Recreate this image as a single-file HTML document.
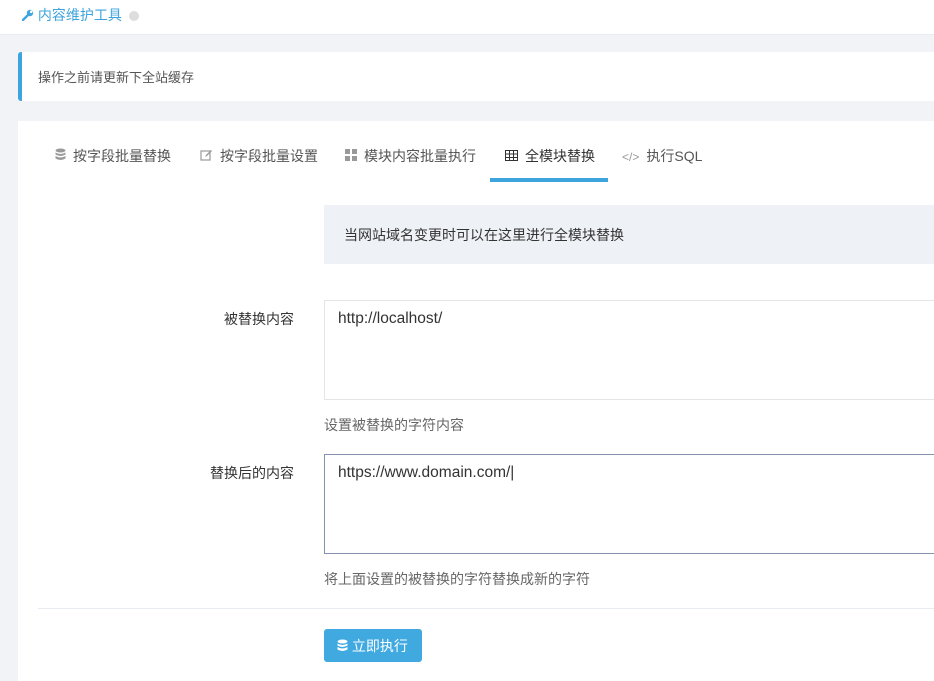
<!DOCTYPE html>
<html><head><meta charset="utf-8"><style>
*{box-sizing:border-box;margin:0;padding:0}
body{width:934px;height:673px;overflow:hidden;background:#f1f3f7;font-family:"Liberation Sans","Noto Sans CJK SC",sans-serif;font-size:14px;color:#333;position:relative}
.top{position:absolute;left:0;top:0;width:934px;height:35px;background:#fff;border-bottom:1px solid #e8ebf0}
.top .t{position:absolute;left:22px;top:5px;color:#3ea4dd;font-size:14px}
.dot{display:inline-block;width:10px;height:10px;border-radius:50%;background:#ddd;margin-left:7px;vertical-align:-1px}
.alert{position:absolute;left:18px;top:52px;width:916px;height:49px;background:#fff;border-left:4px solid #3ea4dd;border-radius:3px 0 0 3px;padding:15px 16px;color:#555;font-size:13px}
.panel{position:absolute;left:18px;top:121px;width:916px;height:560px;background:#fff}
.tab{position:absolute;top:25px;font-size:14px;color:#555;white-space:nowrap}
.tab i{color:#999;font-style:normal;margin-right:7px}
.ul{position:absolute;left:472px;top:57px;width:118px;height:4px;background:#3ea4dd}
.info{position:absolute;left:306px;top:84px;width:610px;height:59px;background:#eef1f5;padding:20px 20px;color:#333}
.lab{position:absolute;width:276px;text-align:right;color:#333}
.ta{position:absolute;left:306px;width:620px;height:100px;border:1px solid #e5e5e5;padding:9px 13px;font-size:15.5px;color:#333}
.help{position:absolute;left:306px;color:#666}
.hr{position:absolute;left:20px;top:487px;width:896px;height:1px;background:#e8ebf0}
.btn{position:absolute;left:306px;top:508px;width:98px;height:33px;background:#3fa9e0;border-radius:3px;color:#fff;font-size:14px;padding:7px 0 0 13px}
</style></head><body>
<div class="top"><div class="t"><svg width="12" height="12" viewBox="0 0 12 12" style="vertical-align:-1px"><path d="M1 11 L6 6" stroke="#3ea4dd" stroke-width="2.4" stroke-linecap="round"/><circle cx="8" cy="4" r="3.2" fill="#3ea4dd"/><circle cx="9.2" cy="2.8" r="1.3" fill="#fff"/></svg> 内容维护工具<span class="dot"></span></div></div>
<div class="alert">操作之前请更新下全站缓存</div>
<div class="panel">
<div class="tab" style="left:37px"><i>
<svg width="11" height="13" viewBox="0 0 11 13"><ellipse cx="5.5" cy="2.5" rx="5" ry="2" fill="#999"/><path d="M.5 4.5q5 3 10 0v2q-5 3-10 0zM.5 8q5 3 10 0v2.5q-5 3-10 0z" fill="#999"/></svg></i>按字段批量替换</div>
<div class="tab" style="left:182px"><i><svg width="13" height="12" viewBox="0 0 13 12"><rect x="1" y="2" width="9" height="9" fill="none" stroke="#999" stroke-width="1.2"/><path d="M5 8l1-2 5-5 1 1-5 5z" fill="#999"/></svg></i>按字段批量设置</div>
<div class="tab" style="left:327px"><i><svg width="12" height="12"><rect x="0" y="0" width="5" height="5" fill="#999"/><rect x="7" y="0" width="5" height="5" fill="#999"/><rect x="0" y="7" width="5" height="5" fill="#999"/><rect x="7" y="7" width="5" height="5" fill="#999"/></svg></i>模块内容批量执行</div>
<div class="tab" style="left:487px;color:#333"><i><svg width="13" height="11" viewBox="0 0 13 11"><rect x=".5" y=".5" width="12" height="10" fill="none" stroke="#333"/><path d="M.5 4h12M.5 7.5h12M4.5 .5v10M8.5 .5v10" stroke="#333"/></svg></i>全模块替换</div>
<div class="tab" style="left:604px"><i style="font-size:12px">&lt;/&gt;</i>执行SQL</div>
<div class="ul"></div>
<div class="info">当网站域名变更时可以在这里进行全模块替换</div>
<div class="lab" style="top:188px">被替换内容</div>
<div class="ta" style="top:179px">http://localhost/</div>
<div class="help" style="top:294px">设置被替换的字符内容</div>
<div class="lab" style="top:342px">替换后的内容</div>
<div class="ta" style="top:333px;border-color:#8592ad">https://www.domain.com/|</div>
<div class="help" style="top:448px">将上面设置的被替换的字符替换成新的字符</div>
<div class="hr"></div>
<div class="btn"><svg width="11" height="13" viewBox="0 0 11 13" style="vertical-align:-1px"><ellipse cx="5.5" cy="2.5" rx="5" ry="2" fill="#fff"/><path d="M.5 4.5q5 3 10 0v2q-5 3-10 0zM.5 8q5 3 10 0v2.5q-5 3-10 0z" fill="#fff"/></svg> 立即执行</div>
</div>
</body></html>
